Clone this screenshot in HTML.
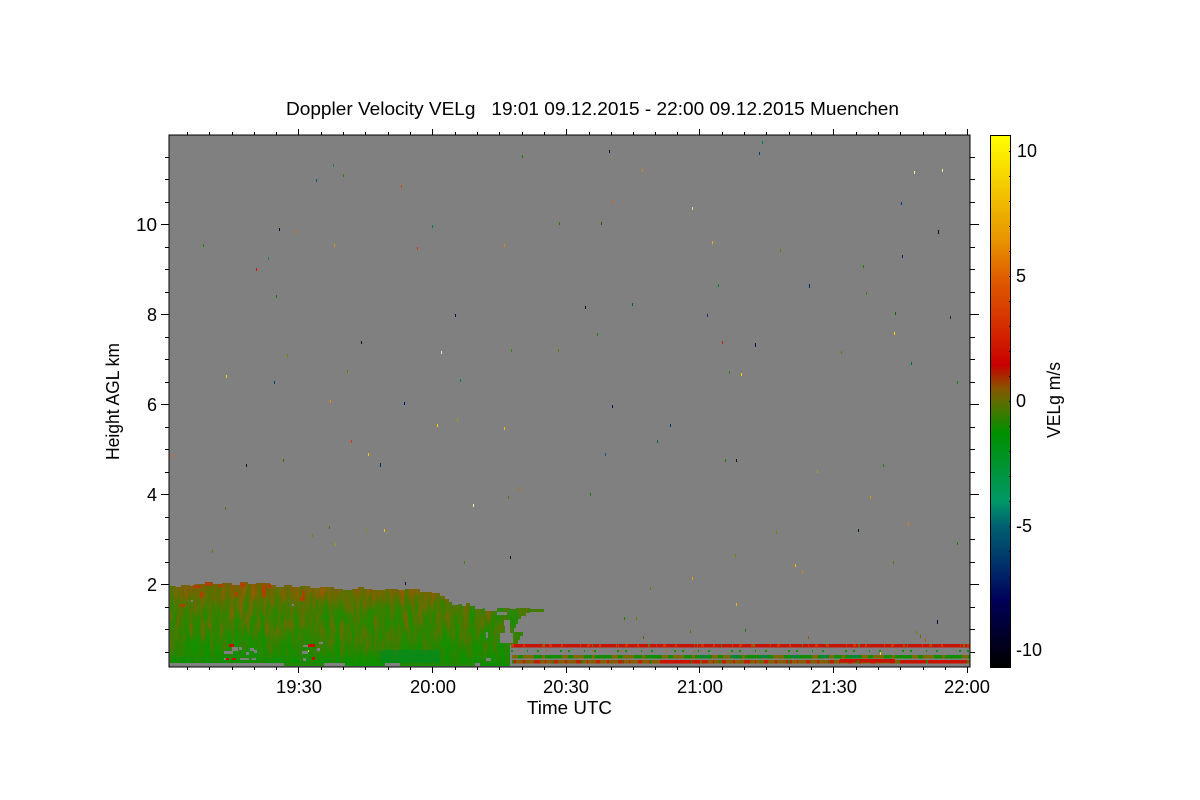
<!DOCTYPE html>
<html><head><meta charset="utf-8"><title>Doppler Velocity</title>
<style>html,body{margin:0;padding:0;background:#fff;width:1200px;height:800px;overflow:hidden}svg{display:block}text{font-family:"Liberation Sans",sans-serif;font-size:18px;fill:#000}</style></head>
<body>
<svg width="1200" height="800" viewBox="0 0 1200 800" xmlns="http://www.w3.org/2000/svg" shape-rendering="crispEdges">
<defs>
<linearGradient id="cb" x1="0" y1="135" x2="0" y2="667" gradientUnits="userSpaceOnUse">
<stop offset="0" stop-color="#ffff00"/><stop offset=".197" stop-color="#e89400"/><stop offset=".265" stop-color="#e06000"/><stop offset=".368" stop-color="#d42800"/><stop offset=".432" stop-color="#c80000"/><stop offset=".475" stop-color="#8a5200"/><stop offset=".5" stop-color="#606c00"/><stop offset=".56" stop-color="#009000"/><stop offset=".688" stop-color="#009868"/><stop offset=".735" stop-color="#006070"/><stop offset=".82" stop-color="#002868"/><stop offset=".875" stop-color="#000058"/><stop offset="1" stop-color="#000000"/>
</linearGradient>
<linearGradient id="bg" x1="0" y1="582" x2="0" y2="667" gradientUnits="userSpaceOnUse">
<stop offset="0" stop-color="#8a5606"/><stop offset=".14" stop-color="#726600"/><stop offset=".34" stop-color="#507600"/><stop offset=".65" stop-color="#3c7e00"/><stop offset=".88" stop-color="#1e8800"/><stop offset="1" stop-color="#0c8c00"/>
</linearGradient>
<clipPath id="cl"><path d="M170 586H176V587H181V585H190V586H195V584H205V582H213V584H222V583H232V585H240V582H248V584H256V583H270V585H276V587H284V585H292V587H300V586H310V588H320V587H334V589H343V590H352V589H358V587H364V589H372V590H385V589H398V590H405V589H420V592H432V593H440V596H445V599H449V602H452V605H458V604H462V606H466V603H470V606H475V609H483V608H488V610H497V608H510V609H516V608H530V609H544V612H530V613H526V616H521V619H518V624H516V628H514V632H523V636H520V640H518V645H510V663H170Z"/></clipPath>
<filter id="nz" x="0" y="0" width="100%" height="100%" color-interpolation-filters="sRGB"><feTurbulence type="fractalNoise" baseFrequency="0.2 0.035" numOctaves="3" seed="7"/><feColorMatrix type="matrix" values="0 0 0 0 0.04  0 0 0 0 0.58  0 0 0 0 0  3.4 0 0 0 -1.3"/></filter>
<filter id="nb" x="0" y="0" width="100%" height="100%" color-interpolation-filters="sRGB"><feTurbulence type="fractalNoise" baseFrequency="0.22 0.05" numOctaves="3" seed="21"/><feColorMatrix type="matrix" values="0 0 0 0 0.58  0 0 0 0 0.36  0 0 0 0 0  0 4 0 0 -1.8"/></filter>
<linearGradient id="fd" x1="0" y1="582" x2="0" y2="667" gradientUnits="userSpaceOnUse"><stop offset="0" stop-color="#fff"/><stop offset=".45" stop-color="#a0a0a0"/><stop offset=".8" stop-color="#555"/><stop offset="1" stop-color="#222"/></linearGradient>
<linearGradient id="fg" x1="0" y1="582" x2="0" y2="667" gradientUnits="userSpaceOnUse"><stop offset="0" stop-color="#444"/><stop offset=".4" stop-color="#aaa"/><stop offset="1" stop-color="#eee"/></linearGradient>
<mask id="mf"><rect x="169" y="580" width="380" height="90" fill="url(#fd)"/></mask>
<mask id="mg"><rect x="169" y="580" width="380" height="90" fill="url(#fg)"/></mask>
</defs>

<rect x="169.5" y="135.5" width="800.5" height="531" fill="#808080"/>

<g clip-path="url(#cl)">
<rect x="169" y="580" width="380" height="88" fill="url(#bg)"/>
<rect x="169" y="580" width="380" height="88" filter="url(#nb)" mask="url(#mf)"/>
<rect x="169" y="580" width="380" height="88" filter="url(#nz)" mask="url(#mg)"/>
<rect x="380" y="650" width="60" height="13" fill="#008a28" opacity=".55"/>
</g>
<!-- top reddish blobs -->
<g fill="#b04000">
<rect x="205" y="582" width="7" height="4"/><rect x="193" y="585" width="8" height="3"/><rect x="218" y="584" width="5" height="3"/><rect x="240" y="583" width="5" height="4"/><rect x="262" y="585" width="4" height="6"/><rect x="268" y="584" width="3" height="4"/><rect x="262" y="590" width="4" height="7"/>
<rect x="200" y="592" width="3" height="6"/><rect x="302" y="590" width="3" height="10"/><rect x="300" y="597" width="5" height="4"/><rect x="235" y="592" width="3" height="5"/>
<rect x="180" y="604" width="5" height="3"/>
</g>
<!-- gray holes -->
<g fill="#808080">
<rect x="224" y="651" width="9" height="3"/><rect x="232" y="647" width="6" height="4"/><rect x="239" y="647" width="3" height="3"/><rect x="246" y="652" width="3" height="3"/><rect x="250" y="648" width="4" height="3"/><rect x="254" y="650" width="3" height="3"/><rect x="224" y="658" width="2" height="2"/><rect x="240" y="658" width="9" height="2"/><rect x="252" y="658" width="4" height="2"/><rect x="303" y="645" width="7" height="2"/><rect x="302" y="651" width="6" height="3"/><rect x="317" y="648" width="3" height="3"/><rect x="303" y="658" width="3" height="3"/><rect x="319" y="642" width="4" height="2"/>
<rect x="486" y="632" width="2" height="6"/><rect x="486" y="658" width="5" height="3"/>
<rect x="170" y="663" width="800" height="4"/>
<rect x="191" y="600" width="2" height="2"/><rect x="292" y="604" width="2" height="2"/>
<rect x="485" y="608" width="12" height="3"/><rect x="497" y="612" width="10" height="3"/><rect x="504" y="620" width="6" height="6"/><rect x="500" y="633" width="13" height="10"/><rect x="505" y="626" width="5" height="7"/>
</g>
<!-- green that extends into the bottom gray band -->
<rect x="284" y="663" width="40" height="3" fill="#208800"/><rect x="345" y="663" width="40" height="3" fill="#109000"/><rect x="400" y="663" width="75" height="3" fill="#208800"/><rect x="480" y="663" width="30" height="3" fill="#108c00"/>
<g fill="#c81000">
<rect x="229" y="644" width="5" height="3"/><rect x="226" y="658" width="3" height="2"/><rect x="232" y="658" width="4" height="2"/><rect x="308" y="644" width="7" height="3"/><rect x="312" y="657" width="3" height="3"/>
</g>
<rect x="308" y="650" width="1" height="2" fill="#f0c000"/>

<!-- horizontal layers -->
<rect x="511" y="644" width="459" height="3.5" fill="#c41400"/>
<path d="M511 645.5H970" stroke="#d83000" stroke-width="3" stroke-dasharray="3 9 2 17 1 6" fill="none"/>
<path d="M511 645.5H970" stroke="#806800" stroke-width="3" stroke-dasharray="1 31 2 47 1 23" fill="none"/>
<path d="M511 651H970" stroke="#109000" stroke-width="2" stroke-dasharray="2 14 1 9 2 21 2 6" fill="none"/>
<path d="M518 651H720" stroke="#c86000" stroke-width="2" stroke-dasharray="1 27 1 45" fill="none"/>
<path d="M512 656.5H970" stroke="#128c00" stroke-width="3.5" fill="none"/>
<path d="M512 656.5H970" stroke="#7a6c00" stroke-width="3.5" stroke-dasharray="6 5 11 8 3 17" fill="none"/>
<path d="M700 656.5H860" stroke="#008838" stroke-width="3" stroke-dasharray="9 21" fill="none"/>
<path d="M512 661.5H970" stroke="#8a5c00" stroke-width="3.5" fill="none"/>
<path d="M512 661.5H970" stroke="#c02000" stroke-width="3.5" stroke-dasharray="4 7 2 9 6 5 1 8" fill="none"/>
<path d="M660 661.5H700M840 660.5H895M900 661.5H968" stroke="#c81400" stroke-width="3.5" fill="none"/>
<path d="M512 661.5H970" stroke="#2c8000" stroke-width="3.5" stroke-dasharray="2 39 1 27" fill="none"/>
<rect x="880" y="652" width="1" height="3" fill="#ffe000"/>

<!-- speckles -->
<g>
<rect x="522" y="155" width="1" height="3" fill="#208000"/><rect x="609" y="150" width="1" height="3" fill="#001040"/><rect x="762" y="141" width="1" height="3" fill="#008060"/><rect x="759" y="152" width="1" height="3" fill="#004070"/><rect x="642" y="169" width="1" height="3" fill="#e08000"/><rect x="333" y="164" width="1" height="3" fill="#108060"/><rect x="316" y="179" width="1" height="3" fill="#006060"/><rect x="343" y="174" width="1" height="3" fill="#308000"/><rect x="401" y="185" width="1" height="3" fill="#d04000"/><rect x="914" y="171" width="1" height="3" fill="#ffe8a0"/><rect x="942" y="169" width="1" height="3" fill="#ffe8a0"/><rect x="612" y="201" width="1" height="3" fill="#e06000"/><rect x="559" y="222" width="1" height="3" fill="#407000"/><rect x="601" y="222" width="1" height="3" fill="#206000"/><rect x="432" y="225" width="1" height="3" fill="#008050"/><rect x="279" y="228" width="1" height="3" fill="#001030"/><rect x="297" y="230" width="1" height="3" fill="#e07000"/><rect x="938" y="230" width="1" height="4" fill="#000830"/><rect x="901" y="202" width="1" height="3" fill="#004080"/><rect x="692" y="207" width="1" height="3" fill="#ffd080"/><rect x="203" y="244" width="1" height="3" fill="#208000"/><rect x="268" y="257" width="1" height="3" fill="#008080"/><rect x="334" y="244" width="1" height="3" fill="#e09000"/><rect x="417" y="247" width="1" height="3" fill="#d04000"/><rect x="504" y="244" width="1" height="3" fill="#e08000"/><rect x="712" y="241" width="1" height="3" fill="#f0b000"/><rect x="256" y="268" width="1" height="3" fill="#d01000"/><rect x="780" y="249" width="1" height="3" fill="#608000"/><rect x="902" y="255" width="1" height="3" fill="#002060"/><rect x="863" y="265" width="1" height="3" fill="#208000"/><rect x="276" y="295" width="1" height="3" fill="#008000"/><rect x="718" y="284" width="1" height="3" fill="#008040"/><rect x="809" y="284" width="1" height="4" fill="#002080"/><rect x="866" y="292" width="1" height="3" fill="#408000"/><rect x="585" y="306" width="1" height="3" fill="#000820"/><rect x="632" y="303" width="1" height="3" fill="#006040"/><rect x="455" y="314" width="1" height="3" fill="#001040"/><rect x="707" y="314" width="1" height="3" fill="#103070"/><rect x="895" y="312" width="1" height="3" fill="#206000"/><rect x="950" y="316" width="1" height="3" fill="#103040"/><rect x="894" y="332" width="1" height="3" fill="#ffd000"/><rect x="597" y="333" width="1" height="3" fill="#208000"/><rect x="722" y="341" width="1" height="3" fill="#e02000"/><rect x="361" y="341" width="1" height="3" fill="#000820"/><rect x="755" y="343" width="1" height="4" fill="#001060"/><rect x="441" y="351" width="1" height="3" fill="#f8e0c0"/><rect x="287" y="354" width="1" height="3" fill="#808000"/><rect x="511" y="349" width="1" height="3" fill="#408000"/><rect x="558" y="349" width="1" height="3" fill="#508000"/><rect x="841" y="351" width="1" height="3" fill="#807000"/><rect x="226" y="375" width="1" height="3" fill="#f0d000"/><rect x="347" y="370" width="1" height="3" fill="#608000"/><rect x="274" y="381" width="1" height="3" fill="#004080"/><rect x="460" y="379" width="1" height="3" fill="#008050"/><rect x="729" y="371" width="1" height="3" fill="#308000"/><rect x="741" y="373" width="1" height="3" fill="#f8d000"/><rect x="911" y="362" width="1" height="3" fill="#006060"/><rect x="957" y="381" width="1" height="3" fill="#208000"/><rect x="330" y="400" width="1" height="3" fill="#f09000"/><rect x="404" y="402" width="1" height="3" fill="#001080"/><rect x="612" y="405" width="1" height="3" fill="#001050"/><rect x="172" y="454" width="1" height="3" fill="#f06000"/><rect x="670" y="424" width="1" height="3" fill="#003080"/><rect x="437" y="424" width="1" height="3" fill="#ffd000"/><rect x="457" y="419" width="1" height="3" fill="#a0a000"/><rect x="504" y="427" width="1" height="3" fill="#f0c000"/><rect x="351" y="440" width="1" height="3" fill="#e03000"/><rect x="657" y="440" width="1" height="3" fill="#006060"/><rect x="368" y="453" width="1" height="3" fill="#f0c000"/><rect x="605" y="453" width="1" height="3" fill="#006080"/><rect x="380" y="463" width="1" height="4" fill="#003060"/><rect x="246" y="464" width="1" height="3" fill="#001030"/><rect x="283" y="459" width="1" height="3" fill="#506000"/><rect x="725" y="459" width="1" height="3" fill="#208000"/><rect x="736" y="459" width="1" height="3" fill="#001030"/><rect x="883" y="464" width="1" height="3" fill="#208000"/><rect x="817" y="470" width="1" height="3" fill="#a0a020"/><rect x="518" y="487" width="1" height="4" fill="#c07000"/><rect x="590" y="493" width="1" height="3" fill="#208000"/><rect x="508" y="496" width="1" height="3" fill="#408000"/><rect x="473" y="504" width="1" height="3" fill="#f8f0c0"/><rect x="870" y="496" width="1" height="3" fill="#e09000"/><rect x="225" y="507" width="1" height="3" fill="#408000"/><rect x="329" y="526" width="1" height="3" fill="#607000"/><rect x="366" y="529" width="1" height="3" fill="#809000"/><rect x="384" y="529" width="1" height="3" fill="#f0c000"/><rect x="312" y="534" width="1" height="3" fill="#808000"/><rect x="858" y="529" width="1" height="3" fill="#001030"/><rect x="908" y="523" width="1" height="3" fill="#e08000"/><rect x="776" y="531" width="1" height="3" fill="#808000"/><rect x="335" y="543" width="1" height="3" fill="#a0a000"/><rect x="957" y="542" width="1" height="3" fill="#208000"/><rect x="212" y="550" width="1" height="3" fill="#608000"/><rect x="510" y="556" width="1" height="3" fill="#001030"/><rect x="464" y="561" width="1" height="3" fill="#408000"/><rect x="795" y="564" width="1" height="3" fill="#f0c000"/><rect x="893" y="561" width="1" height="3" fill="#508000"/><rect x="735" y="554" width="1" height="3" fill="#808000"/><rect x="802" y="570" width="1" height="3" fill="#c09000"/><rect x="692" y="577" width="1" height="3" fill="#f0a000"/><rect x="405" y="582" width="1" height="3" fill="#001050"/><rect x="650" y="587" width="1" height="3" fill="#608000"/><rect x="736" y="603" width="1" height="3" fill="#f0b000"/><rect x="624" y="617" width="1" height="3" fill="#208000"/><rect x="636" y="617" width="1" height="3" fill="#608000"/><rect x="690" y="630" width="1" height="3" fill="#806000"/><rect x="745" y="629" width="1" height="3" fill="#208000"/><rect x="937" y="620" width="1" height="4" fill="#001030"/><rect x="916" y="631" width="1" height="3" fill="#808000"/><rect x="920" y="635" width="1" height="3" fill="#806000"/><rect x="925" y="639" width="1" height="3" fill="#c05000"/><rect x="643" y="636" width="1" height="3" fill="#606000"/><rect x="808" y="636" width="1" height="3" fill="#806000"/>
</g>

<!-- axes frame -->
<rect x="169" y="135" width="801" height="532" fill="none" stroke="#000" stroke-width="1"/>

<!-- ticks -->
<path stroke="#000" stroke-width="1" fill="none" d="
M161 224.5H169M161 314.5H169M161 404.5H169M161 494.5H169M161 584.5H169
M165 157.5H169M165 179.5H169M165 202.5H169M165 247.5H169M165 269.5H169M165 292.5H169M165 337.5H169M165 359.5H169M165 382.5H169M165 427.5H169M165 449.5H169M165 472.5H169M165 517.5H169M165 539.5H169M165 562.5H169M165 607.5H169M165 629.5H169M165 652.5H169
M970 224.5H979M970 314.5H979M970 404.5H979M970 494.5H979M970 584.5H979
M970 157.5H975M970 179.5H975M970 202.5H975M970 247.5H975M970 269.5H975M970 292.5H975M970 337.5H975M970 359.5H975M970 382.5H975M970 427.5H975M970 449.5H975M970 472.5H975M970 517.5H975M970 539.5H975M970 562.5H975M970 607.5H975M970 629.5H975M970 652.5H975"/>
<path stroke="#000" stroke-width="1" fill="none" d="
M298.5 667V673M432.5 667V673M566.5 667V673M699.5 667V673M833.5 667V673M967.5 667V673
M187.5 667V670M209.5 667V670M232.5 667V670M254.5 667V670M276.5 667V670M321.5 667V670M343.5 667V670M365.5 667V670M388.5 667V670M410.5 667V670M455.5 667V670M477.5 667V670M499.5 667V670M522.5 667V670M544.5 667V670M589.5 667V670M611.5 667V670M633.5 667V670M655.5 667V670M677.5 667V670M722.5 667V670M744.5 667V670M766.5 667V670M789.5 667V670M811.5 667V670M856.5 667V670M878.5 667V670M900.5 667V670M923.5 667V670M945.5 667V670
M298.5 129V135M432.5 129V135M566.5 129V135M699.5 129V135M833.5 129V135M967.5 129V135
M187.5 132V135M209.5 132V135M232.5 132V135M254.5 132V135M276.5 132V135M321.5 132V135M343.5 132V135M365.5 132V135M388.5 132V135M410.5 132V135M455.5 132V135M477.5 132V135M499.5 132V135M522.5 132V135M544.5 132V135M589.5 132V135M611.5 132V135M633.5 132V135M655.5 132V135M677.5 132V135M722.5 132V135M744.5 132V135M766.5 132V135M789.5 132V135M811.5 132V135M856.5 132V135M878.5 132V135M900.5 132V135M923.5 132V135M945.5 132V135"/>

<!-- colorbar -->
<rect x="990.5" y="135.5" width="20" height="532" fill="url(#cb)" stroke="#000" stroke-width="1"/>
<path stroke="#000" stroke-width="1" fill="none" d="M1009 151.5H1011M1009 176.5H1011M1009 201.5H1011M1009 226.5H1011M1009 251.5H1011M1009 276.5H1011M1009 301.5H1011M1009 326.5H1011M1009 351.5H1011M1009 376.5H1011M1009 401.5H1011M1009 426.5H1011M1009 451.5H1011M1009 476.5H1011M1009 501.5H1011M1009 526.5H1011M1009 551.5H1011M1009 576.5H1011M1009 601.5H1011M1009 626.5H1011M1009 651.5H1011"/>

<!-- text -->
<g shape-rendering="auto">
<text x="286" y="115" textLength="613" lengthAdjust="spacingAndGlyphs" xml:space="preserve">Doppler Velocity VELg   19:01 09.12.2015 - 22:00 09.12.2015 Muenchen</text>
<text x="136" y="231" textLength="21" lengthAdjust="spacingAndGlyphs">10</text>
<text x="147" y="321">8</text><text x="147" y="411">6</text><text x="147" y="501">4</text><text x="147" y="591">2</text>
<text x="276" y="693" textLength="46" lengthAdjust="spacingAndGlyphs">19:30</text><text x="410" y="693" textLength="46" lengthAdjust="spacingAndGlyphs">20:00</text><text x="543" y="693" textLength="46" lengthAdjust="spacingAndGlyphs">20:30</text><text x="677" y="693" textLength="46" lengthAdjust="spacingAndGlyphs">21:00</text><text x="811" y="693" textLength="46" lengthAdjust="spacingAndGlyphs">21:30</text><text x="944" y="693" textLength="46" lengthAdjust="spacingAndGlyphs">22:00</text>
<text x="527" y="714" textLength="85" lengthAdjust="spacingAndGlyphs">Time UTC</text>
<text transform="translate(119,460) rotate(-90)" textLength="117" lengthAdjust="spacingAndGlyphs">Height AGL km</text>
<text transform="translate(1060,438) rotate(-90)" textLength="76" lengthAdjust="spacingAndGlyphs">VELg m/s</text>
<text x="1017" y="157" textLength="20" lengthAdjust="spacingAndGlyphs">10</text><text x="1016" y="282">5</text><text x="1016" y="407">0</text>
<text x="1016" y="532" textLength="16" lengthAdjust="spacingAndGlyphs">-5</text><text x="1016" y="656" textLength="26" lengthAdjust="spacingAndGlyphs">-10</text>
</g>
</svg>
</body></html>
